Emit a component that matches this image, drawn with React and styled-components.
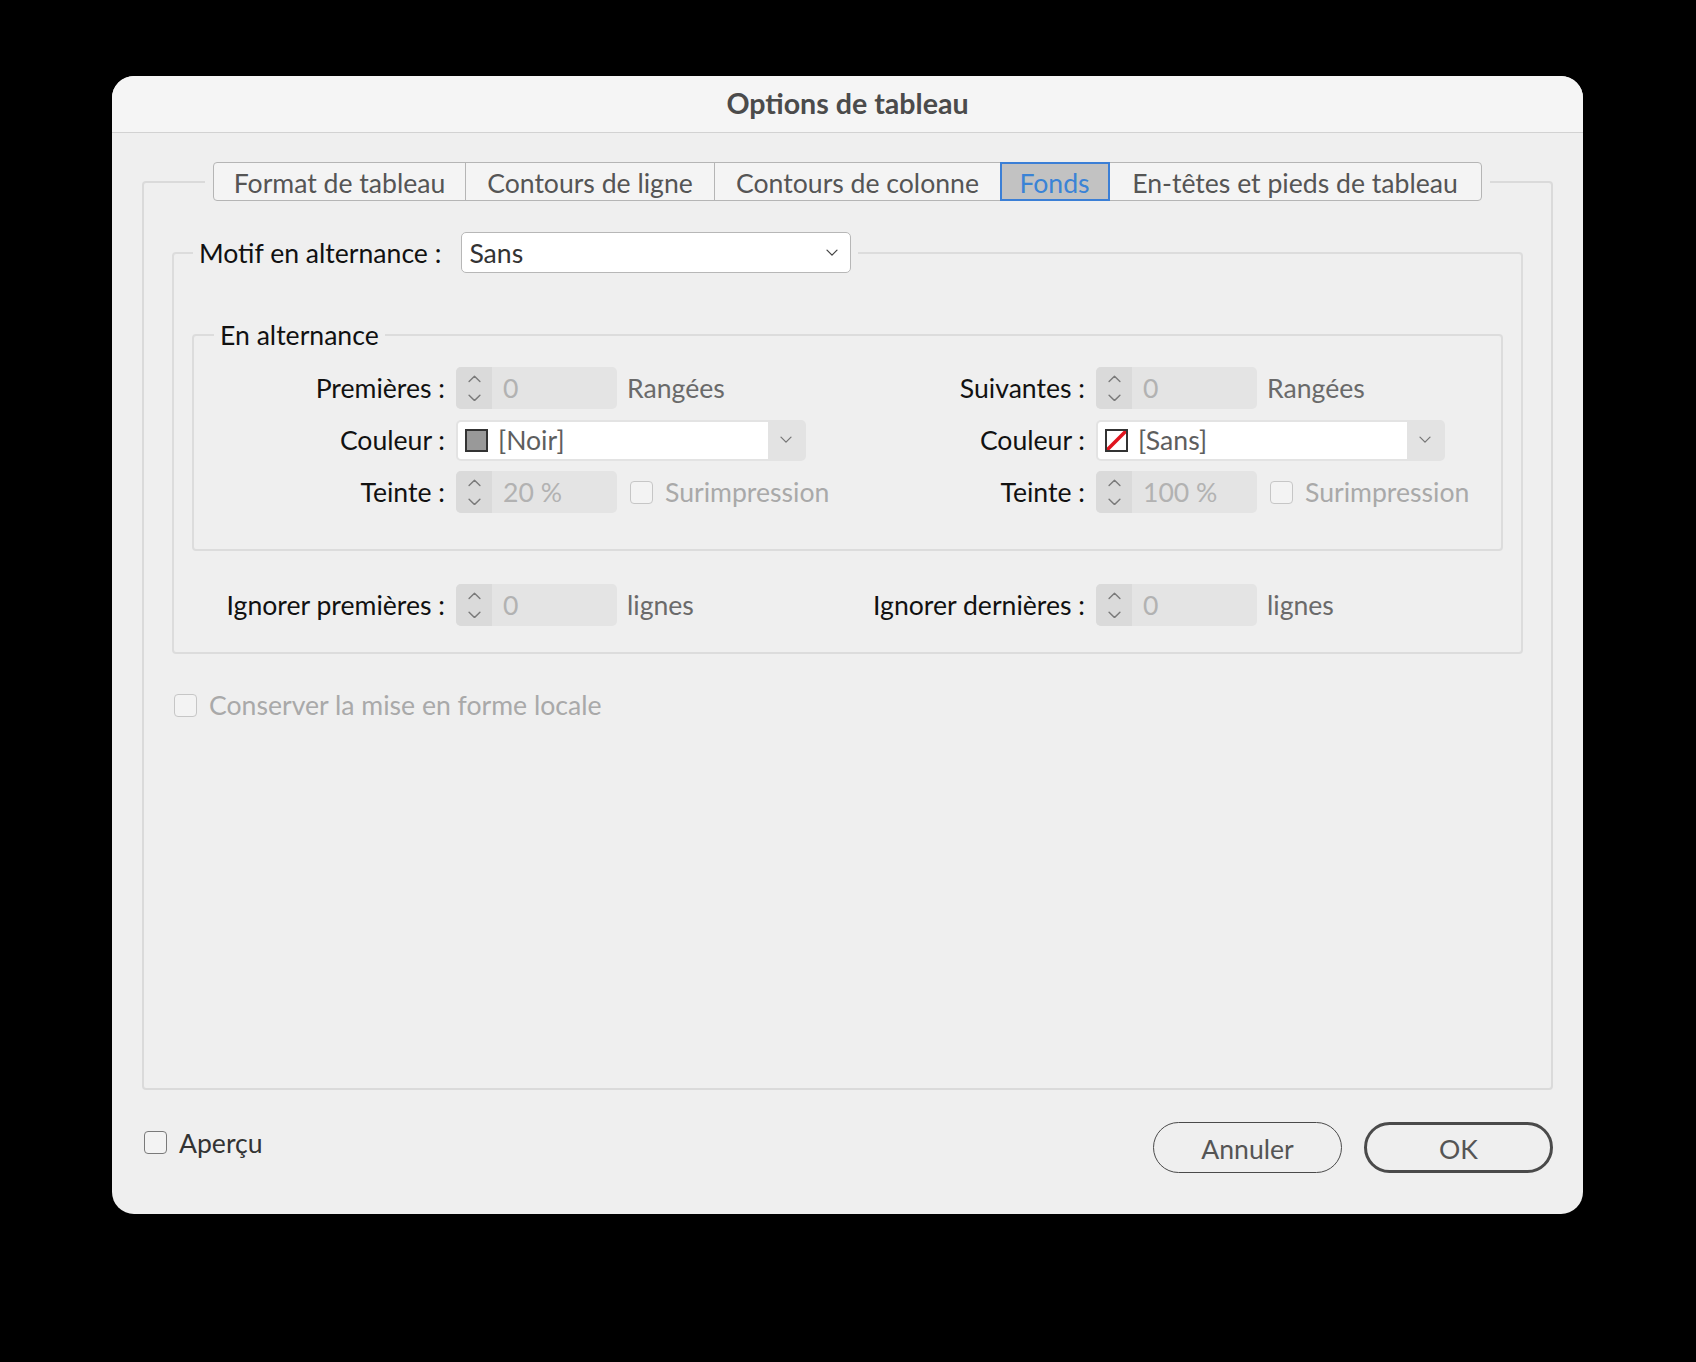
import React from 'react';
import styled, { createGlobalStyle } from 'styled-components';

const GlobalStyle = createGlobalStyle`
  html, body {
    margin: 0;
    background: #000;
  }
  body {
    font-family: Lato, "Open Sans", sans-serif;
  }
  * {
    box-sizing: border-box;
  }
`;

const FONT = '26.6px';

const Screen = styled.div`
  width: 1696px;
  height: 1362px;
  padding: 76px 0 0 112px;
`;

const Dialog = styled.div`
  width: 1471px;
  height: 1138px;
  background: #efefef;
  border-radius: 22px;
  overflow: hidden;
  display: flex;
  flex-direction: column;
`;

const TitleBar = styled.div`
  height: 57px;
  flex: none;
  padding-bottom: 2px;
  background: #f5f5f5;
  border-bottom: 1.5px solid #d2d2d2;
  display: flex;
  align-items: center;
  justify-content: center;
  font-size: 28.6px;
  font-weight: 700;
  color: #4b4b4b;
`;

const Body = styled.div`
  padding: 29px 30px 0 30px;
`;

const TabPanel = styled.fieldset`
  margin: 0;
  padding: 31px 28px 0 28px;
  min-width: 0;
  height: 928px;
  border: 2px solid #dadada;
  border-radius: 4px;
`;

const TabLegend = styled.legend`
  margin: 0 auto;
  padding: 0 8px;
`;

const TabStrip = styled.div`
  display: flex;
`;

const Tab = styled.div`
  position: relative;
  width: ${({ $w }) => $w}px;
  height: 39px;
  margin-left: -1.5px;
  padding-top: 2px;
  display: flex;
  align-items: center;
  justify-content: center;
  font-size: ${FONT};
  color: ${({ $active }) => ($active ? '#3a83d6' : '#555')};
  background: ${({ $active }) => ($active ? '#c2c2c2' : '#f4f4f4')};
  border: ${({ $active }) => ($active ? '2px solid #3b7fd6' : '1.5px solid #b5b5b5')};
  z-index: ${({ $active }) => ($active ? 1 : 0)};

  &:first-child {
    margin-left: 0;
    border-radius: 4px 0 0 4px;
  }
  &:last-child {
    border-radius: 0 4px 4px 0;
  }
`;

const Group = styled.fieldset`
  margin: 0 ${({ $inset }) => $inset || 0}px;
  padding: ${({ $pad }) => $pad};
  min-width: 0;
  border: 2px solid #dcdcdc;
  border-radius: 4px;
`;

const GroupLegend = styled.legend`
  margin-left: ${({ $offset }) => $offset}px;
  padding: 0 6px;
  font-size: ${FONT};
  line-height: 30px;
  color: #111;
`;

const MotifLegend = styled(GroupLegend)`
  padding: 0 7px 0 6px;
`;

const LegendRow = styled.div`
  display: flex;
  align-items: center;
  gap: 20px;
`;

const Select = styled.div`
  width: 390px;
  height: 41px;
  background: #fff;
  border: 1px solid #b7b7b7;
  border-radius: 5px;
  display: flex;
  align-items: center;
  justify-content: space-between;
  padding: 0 12px 0 7px;
  font-size: ${FONT};
  color: #333;
`;

const FieldGrid = styled.div`
  display: grid;
  grid-template-columns: 262px 350px 290px 349px;
  grid-auto-rows: 42px;
  row-gap: 10px;
  align-items: center;
  padding-left: ${({ $left }) => $left || 0}px;
`;

const Label = styled.div`
  padding-right: 11px;
  text-align: right;
  font-size: ${FONT};
  color: #111;
  white-space: nowrap;
`;

const Control = styled.div`
  display: flex;
  align-items: center;
  height: 100%;
`;

const Spinner = styled.div`
  width: 161px;
  height: 42px;
  flex: none;
  display: flex;
  background: #e4e4e4;
  border-radius: 5px;
  overflow: hidden;
`;

const SpinArrows = styled.div`
  width: 36px;
  background: #dadada;
  display: flex;
  flex-direction: column;
  align-items: center;
  justify-content: center;
  gap: 11px;
`;

const SpinValue = styled.div`
  flex: 1;
  display: flex;
  align-items: center;
  padding-left: 11px;
  font-size: ${FONT};
  color: #b2b2b2;
`;

const Unit = styled.span`
  margin-left: 10px;
  font-size: ${FONT};
  color: #6a6a6a;
`;

const ColorSelect = styled.div`
  width: ${({ $w }) => $w}px;
  height: 41px;
  display: flex;
  border: 2px solid #e3e3e3;
  border-radius: 5px;
  overflow: hidden;
  background: #e3e3e3;
`;

const ColorValue = styled.div`
  flex: 1;
  display: flex;
  align-items: center;
  gap: 10px;
  padding-left: 7px;
  background: #fff;
  font-size: ${FONT};
  color: #5e5e5e;
`;

const ColorArrow = styled.div`
  width: 36px;
  display: flex;
  align-items: center;
  justify-content: center;
`;

const Swatch = styled.span`
  width: 23px;
  height: 23px;
  flex: none;
  border: 2px solid #333;
  background: ${({ $fill }) => $fill};
  display: flex;
`;

const CheckBox = styled.span`
  width: 23px;
  height: 23px;
  flex: none;
  border: 1.5px solid ${({ $dim }) => ($dim ? '#c6c6c6' : '#7a7a7a')};
  border-radius: 4px;
  background: #f3f3f3;
`;

const CheckItem = styled.div`
  display: flex;
  align-items: center;
  gap: 12px;
  margin-left: ${({ $ml }) => $ml || 0}px;
  font-size: ${FONT};
  color: ${({ $dim }) => ($dim ? '#a9a9a9' : '#333')};
`;

const PanelSpacer = styled.div`
  height: 47px;
`;

const IgnoreRow = styled(FieldGrid)`
  margin-top: 33px;
`;

const KeepFormat = styled(CheckItem)`
  margin: 35px 0 0 2px;
`;

const Footer = styled.div`
  display: flex;
  align-items: center;
  justify-content: space-between;
  padding: 32px 30px 0 32px;
`;

const Preview = styled(CheckItem)`
  margin-bottom: 10px;
`;

const Buttons = styled.div`
  display: flex;
  gap: 22px;
`;

const Button = styled.div`
  width: 189px;
  height: 51px;
  padding-top: 2px;
  display: flex;
  align-items: center;
  justify-content: center;
  border: ${({ $primary }) => ($primary ? '3.5px' : '1.5px')} solid #4a4a4a;
  border-radius: 26px;
  font-size: ${FONT};
  color: #555;
`;

const Chevron = ({ up, size = 12, color = '#7a7a7a' }) => (
  <svg width={size} height={size * 0.6} viewBox="0 0 12 7" fill="none">
    <path
      d={up ? 'M1 6 L6 1 L11 6' : 'M1 1 L6 6 L11 1'}
      stroke={color}
      strokeWidth="1.3"
      strokeLinecap="round"
      strokeLinejoin="round"
    />
  </svg>
);

const NumberField = ({ value }) => (
  <Spinner>
    <SpinArrows>
      <Chevron up size={13} />
      <Chevron size={13} />
    </SpinArrows>
    <SpinValue>{value}</SpinValue>
  </Spinner>
);

const NoneSwatch = () => (
  <Swatch $fill="#fff">
    <svg width="19" height="19" viewBox="0 0 19 19">
      <line x1="0" y1="19" x2="19" y2="0" stroke="#e0141e" strokeWidth="3.5" />
    </svg>
  </Swatch>
);

const ColorField = ({ swatch, label, width }) => (
  <ColorSelect $w={width}>
    <ColorValue>
      {swatch}
      {label}
    </ColorValue>
    <ColorArrow>
      <Chevron color="#777" />
    </ColorArrow>
  </ColorSelect>
);

const tabs = [
  { label: 'Format de tableau', w: 253 },
  { label: 'Contours de ligne', w: 251 },
  { label: 'Contours de colonne', w: 287 },
  { label: 'Fonds', w: 110, active: true },
  { label: 'En-têtes et pieds de tableau', w: 374 },
];

const App = () => (
  <Screen>
    <GlobalStyle />
    <Dialog>
      <TitleBar>Options de tableau</TitleBar>
      <Body>
        <TabPanel>
          <TabLegend>
            <TabStrip>
              {tabs.map((t) => (
                <Tab key={t.label} $w={t.w} $active={t.active}>
                  {t.label}
                </Tab>
              ))}
            </TabStrip>
          </TabLegend>

          <Group $pad="0 0 26px 0">
            <MotifLegend $offset={19}>
              <LegendRow>
                <span>Motif en alternance :</span>
                <Select>
                  <span>Sans</span>
                  <Chevron color="#444" />
                </Select>
              </LegendRow>
            </MotifLegend>
            <PanelSpacer />

            <Group $inset={18} $pad="17px 0 36px 0">
              <GroupLegend $offset={20}>En alternance</GroupLegend>
              <FieldGrid>
                <Label>Premières :</Label>
                <Control>
                  <NumberField value="0" />
                  <Unit>Rangées</Unit>
                </Control>
                <Label>Suivantes :</Label>
                <Control>
                  <NumberField value="0" />
                  <Unit>Rangées</Unit>
                </Control>

                <Label>Couleur :</Label>
                <Control>
                  <ColorField width={350} swatch={<Swatch $fill="#999" />} label="[Noir]" />
                </Control>
                <Label>Couleur :</Label>
                <Control>
                  <ColorField width={349} swatch={<NoneSwatch />} label="[Sans]" />
                </Control>

                <Label>Teinte :</Label>
                <Control>
                  <NumberField value="20 %" />
                  <CheckItem $dim $ml={13}>
                    <CheckBox $dim />
                    Surimpression
                  </CheckItem>
                </Control>
                <Label>Teinte :</Label>
                <Control>
                  <NumberField value="100 %" />
                  <CheckItem $dim $ml={13}>
                    <CheckBox $dim />
                    Surimpression
                  </CheckItem>
                </Control>
              </FieldGrid>
            </Group>

            <IgnoreRow $left={20}>
              <Label>Ignorer premières :</Label>
              <Control>
                <NumberField value="0" />
                <Unit>lignes</Unit>
              </Control>
              <Label>Ignorer dernières :</Label>
              <Control>
                <NumberField value="0" />
                <Unit>lignes</Unit>
              </Control>
            </IgnoreRow>
          </Group>

          <KeepFormat $dim>
            <CheckBox $dim />
            Conserver la mise en forme locale
          </KeepFormat>
        </TabPanel>
      </Body>

      <Footer>
        <Preview>
          <CheckBox />
          Aperçu
        </Preview>
        <Buttons>
          <Button>Annuler</Button>
          <Button $primary>OK</Button>
        </Buttons>
      </Footer>
    </Dialog>
  </Screen>
);

export default App;
